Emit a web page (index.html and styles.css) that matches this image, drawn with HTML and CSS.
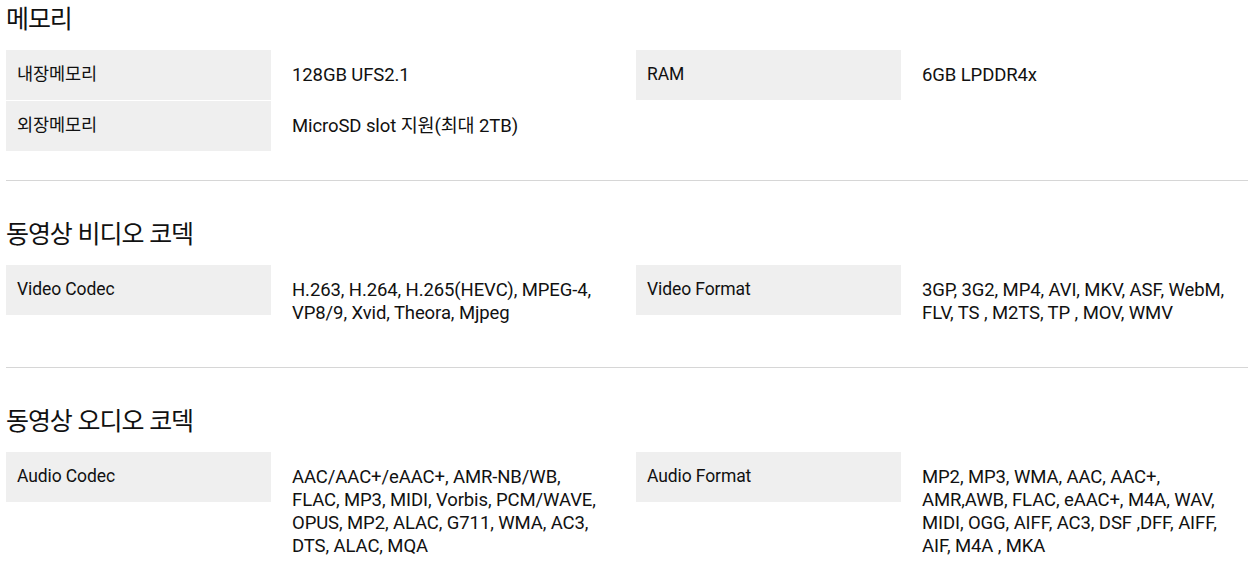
FILE: index.html
```html
<!DOCTYPE html>
<html lang="ko">
<head>
<meta charset="utf-8">
<title>Specs</title>
<link rel="stylesheet" href="styles.css">
</head>
<body>
<div class="specs">
  <section class="spec">
    <h3 class="spec-title">메모리</h3>
    <div class="spec-grid">
      <div class="spec-label">내장메모리</div>
      <div class="spec-value">128GB UFS2.1</div>
      <div class="spec-label">RAM</div>
      <div class="spec-value">6GB LPDDR4x</div>
      <div class="spec-label">외장메모리</div>
      <div class="spec-value">MicroSD slot 지원(최대 2TB)</div>
    </div>
  </section>
  <section class="spec">
    <h3 class="spec-title">동영상 비디오 코덱</h3>
    <div class="spec-grid">
      <div class="spec-label">Video Codec</div>
      <div class="spec-value">H.263, H.264, H.265(HEVC), MPEG-4, VP8/9, Xvid, Theora, Mjpeg</div>
      <div class="spec-label">Video Format</div>
      <div class="spec-value">3GP, 3G2, MP4, AVI, MKV, ASF, WebM, FLV, TS , M2TS, TP , MOV, WMV</div>
    </div>
  </section>
  <section class="spec">
    <h3 class="spec-title">동영상 오디오 코덱</h3>
    <div class="spec-grid">
      <div class="spec-label">Audio Codec</div>
      <div class="spec-value">AAC/AAC+/eAAC+, AMR-NB/WB, FLAC, MP3, MIDI, Vorbis, PCM/WAVE, OPUS, MP2, ALAC, G711, WMA, AC3, DTS, ALAC, MQA</div>
      <div class="spec-label">Audio Format</div>
      <div class="spec-value">MP2, MP3, WMA, AAC, AAC+, AMR,AWB, FLAC, eAAC+, M4A, WAV, MIDI, OGG, AIFF, AC3, DSF ,DFF, AIFF, AIF, M4A , MKA</div>
    </div>
  </section>
</div>
</body>
</html>
```
FILE: styles.css
```css
html, body {
  margin: 0;
  padding: 0;
  background: #ffffff;
}

body {
  font-family: Roboto, "Noto Sans CJK KR", sans-serif;
  color: #111111;
  overflow: hidden;
}

.specs {
  margin-left: 6px;
}

.spec {
  padding-bottom: 29px;
  border-bottom: 1px solid #d6d6d6;
}

.spec + .spec {
  padding-top: 34px;
}

.spec-title {
  margin: 0 0 16px;
  font-family: "Noto Sans CJK KR", sans-serif;
  font-size: 25px;
  font-weight: 400;
  line-height: 34px;
  letter-spacing: -1.1px;
  color: #111111;
}

.spec-grid {
  display: grid;
  grid-template-columns: 265px 365px 265px 1fr;
  row-gap: 1px;
  align-items: start;
}

.spec-label {
  background: #efefef;
  padding: 13px 11px 14px 11px;
  font-size: 17.5px;
  line-height: 23px;
  letter-spacing: -0.1px;
}

.spec-value {
  padding: 14px 6px 13px 21px;
  max-width: 318px;
  font-size: 18.5px;
  line-height: 23px;
  letter-spacing: -0.1px;
}
```
